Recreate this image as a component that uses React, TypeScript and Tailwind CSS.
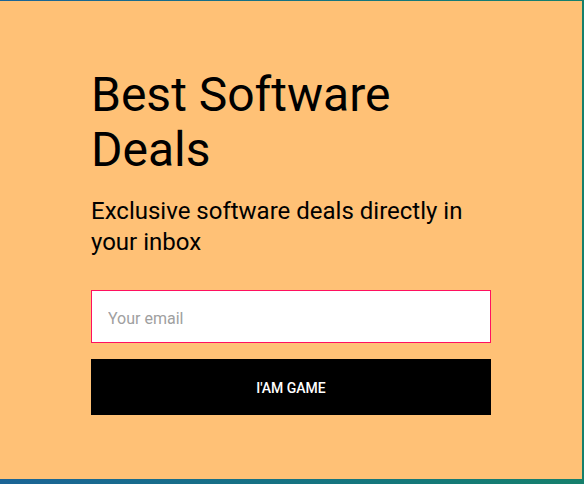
export default function App() {
  return (
    <div className="w-[584px] h-[484px] bg-gradient-to-r from-[#1b6496] to-[#16806c] pt-px">
      <div className="w-[582px] h-[478px] bg-[#ffc176] pl-[91px] pt-[66px] font-['Roboto',sans-serif] text-black">
        <div className="w-[400px]">
          <h1 className="text-[48px] leading-[55px] font-normal">Best Software Deals</h1>
          <p className="mt-[19px] text-[24px] leading-[31px]">Exclusive software deals directly in your inbox</p>
          <form className="mt-[32px] flex flex-col gap-4" onSubmit={(e) => e.preventDefault()}>
            <input
              type="email"
              placeholder="Your email"
              className="h-[53px] w-full border border-[#ff1060] bg-white px-4 pt-[3px] text-[16px] outline-none placeholder:text-[#a0a0a0]"
            />
            <button className="h-[56px] w-full bg-black pt-[2px] text-[14px] font-medium uppercase text-white">I'AM GAME</button>
          </form>
        </div>
      </div>
    </div>
  )
}
